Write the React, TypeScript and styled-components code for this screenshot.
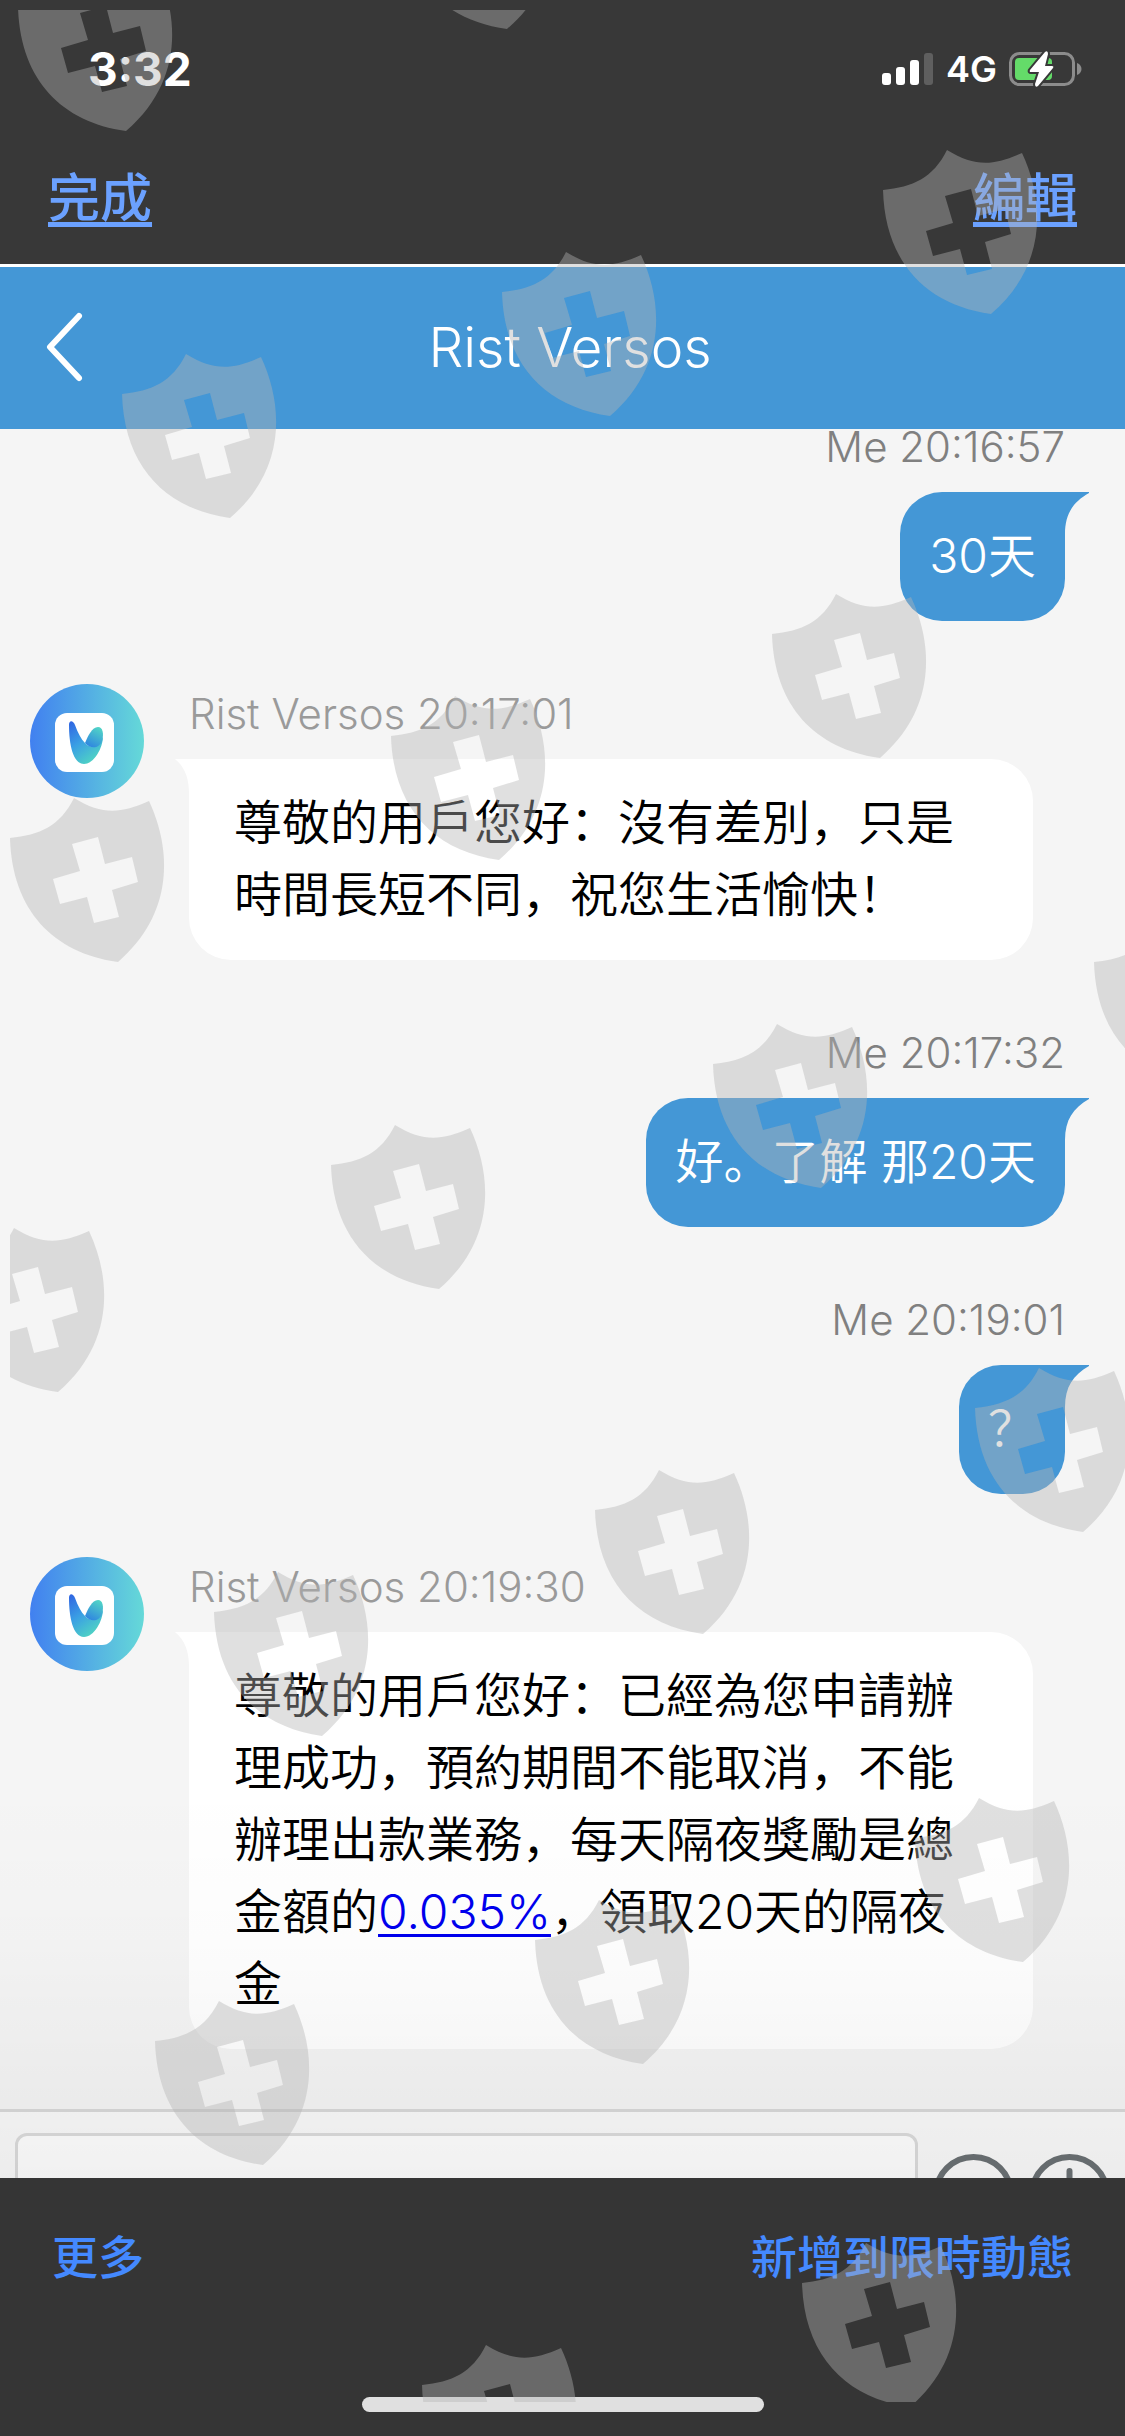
import React from "react";
import styled, { createGlobalStyle } from "styled-components";

const GlobalStyle = createGlobalStyle`
  *, *::before, *::after { box-sizing: border-box; }
  body {
    margin: 0;
    background: #363636;
    font-family: Inter, "Noto Sans CJK SC", sans-serif;
  }
`;

const Screen = styled.div`
  position: relative;
  display: flex;
  flex-direction: column;
  height: 100vh;
  overflow: hidden;
`;

const StatusBar = styled.div`
  display: flex;
  align-items: center;
  justify-content: space-between;
  flex: none;
  height: 138px;
  padding: 0 42px 0 88px;
  background: #383838;
  color: #fff;
`;

const Clock = styled.time`
  font-size: 46px;
  line-height: 60px;
  font-weight: 700;
`;

const StatusIcons = styled.div`
  display: flex;
  align-items: center;
  gap: 12px;
`;

const Network = styled.span`
  font-size: 36px;
  line-height: 36px;
  font-weight: 600;
`;

const ViewerNav = styled.nav`
  display: flex;
  justify-content: space-between;
  flex: none;
  padding: 21px 48px 33px;
  background: #383838;
`;

const NavButton = styled.button`
  padding: 0;
  border: 0;
  background: none;
  color: #6ba1ff;
  font: 500 52px/72px "Noto Sans CJK TC", sans-serif;
  text-decoration: underline 5px;
  text-underline-offset: 5px;
  text-decoration-skip-ink: none;
`;

const ChatHeader = styled.header`
  display: flex;
  align-items: center;
  flex: none;
  height: 165px;
  padding: 0 84px 3px 0;
  border-top: 3px solid #fff;
  background: #4497d6;
`;

const BackButton = styled.button`
  display: flex;
  width: 99px;
  padding: 0 0 0 45px;
  border: 0;
  background: none;
`;

const Title = styled.h1`
  flex: 1;
  margin: 0;
  color: #fff;
  font-size: 55px;
  line-height: 72px;
  font-weight: 350;
  text-align: center;
`;

const Conversation = styled.section`
  position: relative;
  display: flex;
  flex-direction: column;
  flex: 1;
  min-height: 0;
  background: #f5f5f5;

  &::after {
    content: "";
    position: absolute;
    inset: auto 0 0;
    height: 400px;
    background: linear-gradient(rgba(0, 0, 0, 0), rgba(0, 0, 0, 0.012) 40%, rgba(0, 0, 0, 0.055));
    pointer-events: none;
  }
`;

const Messages = styled.main`
  display: flex;
  flex-direction: column;
  justify-content: flex-end;
  gap: 63px;
  flex: 1;
  min-height: 0;
  overflow: hidden;
  padding: 0 60px 60px 30px;
`;

const Row = styled.article<{ $mine?: boolean }>`
  display: flex;
  flex: none;
  gap: 45px;
  justify-content: ${(p) => (p.$mine ? "flex-end" : "flex-start")};
  padding-right: ${(p) => (p.$mine ? "0" : "32px")};
`;

const Body = styled.div<{ $mine?: boolean }>`
  display: flex;
  flex-direction: column;
  flex: ${(p) => (p.$mine ? "none" : "1")};
  align-items: ${(p) => (p.$mine ? "flex-end" : "stretch")};
  gap: 15px;
`;

const Meta = styled.div<{ $mine?: boolean }>`
  color: ${(p) => (p.$mine ? "#808080" : "#9a9a9a")};
  font-size: 42px;
  line-height: 60px;
  font-weight: 350;
`;

const Bubble = styled.div<{ $mine?: boolean }>`
  position: relative;
  padding: ${(p) => (p.$mine ? "28px 29px" : "28px 45px 29px")};
  padding-bottom: 29px;
  border-radius: ${(p) => (p.$mine ? "42px 0 42px 42px" : "0 42px 42px 42px")};
  background: ${(p) => (p.$mine ? "#4497d6" : "#fff")};
  color: ${(p) => (p.$mine ? "#fff" : "#000")};
  font-size: 48px;
  line-height: 72px;
  font-weight: 350;
`;

const Tail = styled.svg<{ $mine?: boolean }>`
  position: absolute;
  top: 0;
  ${(p) => (p.$mine ? "left: 100%" : "right: 100%")};
  margin: 0 -1px;
`;

const RateLink = styled.a`
  color: #0000ee;
  text-decoration: underline 3px;
  text-underline-offset: 5px;
`;

const Composer = styled.form`
  flex: none;
  height: 69px;
  overflow: hidden;
  border-top: 3px solid #d9d9d9;
  background: #fafafa;
`;

const ComposerRow = styled.div`
  display: flex;
  align-items: center;
  gap: 15px;
  padding: 21px 15px;
`;

const MessageInput = styled.input`
  flex: 1;
  min-width: 0;
  height: 123px;
  padding: 0 30px;
  border: 3px solid #dcdcdc;
  border-radius: 12px;
  background: #fff;
  font: 350 48px/72px Inter, "Noto Sans CJK SC", sans-serif;
`;

const ToolButton = styled.button`
  display: flex;
  padding: 0;
  border: 0;
  background: none;
`;

const Footer = styled.footer`
  display: flex;
  flex-direction: column;
  justify-content: space-between;
  align-items: center;
  flex: none;
  height: 258px;
  padding: 46px 52px 24px;
  background: #353535;
`;

const FooterActions = styled.div`
  display: flex;
  justify-content: space-between;
  align-self: stretch;
`;

const FooterButton = styled.button`
  padding: 0;
  border: 0;
  background: none;
  color: #4489ff;
  font: 500 46px/60px "Noto Sans CJK TC", sans-serif;
`;

const HomeIndicator = styled.div`
  width: 402px;
  height: 15px;
  border-radius: 8px;
  background: #e0e0e0;
`;

const Watermark = styled.div`
  position: absolute;
  inset: 10px 0 34px 10px;
  overflow: hidden;
  pointer-events: none;

  svg {
    display: block;
    width: 100%;
    height: 100%;
  }
`;

const SHIELDS = [
  [18, -33], [399, -135],
  [883, 150], [502, 252], [122, 354],
  [772, 594], [391, 696], [10, 798],
  [1094, 922], [713, 1024], [331, 1125], [-50, 1228],
  [975, 1368], [595, 1470], [214, 1572],
  [915, 1798], [535, 1900], [155, 2001],
  [802, 2243], [422, 2345],
];

function ShieldWatermark() {
  return (
    <Watermark aria-hidden="true">
      <svg>
        <defs>
          <path
            id="shield"
            fillRule="evenodd"
            d="M0 40C30 37 50 28 64 0C92 17 110 16 139 3C162 52 164 116 108 164C43 155 2 112 0 40ZM62 46L88 39L95 66L122 59L128 84L102 92L109 119L84 125L77 99L50 106L43 81L70 73Z"
          />
        </defs>
        {SHIELDS.map(([x, y]) => (
          <use key={`${x},${y}`} href="#shield" x={x - 10} y={y - 10} fill="#b3b3b3" fillOpacity="0.41" />
        ))}
      </svg>
    </Watermark>
  );
}

function Avatar() {
  return (
    <svg width="114" height="114" viewBox="0 0 114 114" role="img" aria-label="Rist Versos">
      <defs>
        <linearGradient id="avatarBg">
          <stop offset="0" stopColor="#4180f0" />
          <stop offset="1" stopColor="#65d9d8" />
        </linearGradient>
        <linearGradient id="leafLeft" x1="0" y1="0" x2="0.6" y2="1">
          <stop offset="0" stopColor="#2f62e2" />
          <stop offset="0.5" stopColor="#3a9fe4" />
          <stop offset="1" stopColor="#4fd3c4" />
        </linearGradient>
        <linearGradient id="leafRight" x1="0.8" y1="0" x2="0.3" y2="1">
          <stop offset="0" stopColor="#52d6c6" />
          <stop offset="1" stopColor="#2f86e0" />
        </linearGradient>
      </defs>
      <circle cx="57" cy="57" r="57" fill="url(#avatarBg)" />
      <rect x="25" y="29" width="59" height="59" rx="12" fill="#fff" />
      <path d="M39 41C39 36 43 36 45 41C48 49 51 55 55 59C60 65 70 64 73 52C73 64 64 80 54 80C43 80 39 60 39 41Z" fill="url(#leafLeft)" />
      <path d="M55 59C58 52 62 43 68 43C73 43 74 50 72 57C69 65 60 65 55 59Z" fill="url(#leafRight)" />
    </svg>
  );
}

function Signal() {
  return (
    <svg width="52" height="34" viewBox="0 0 52 34" aria-hidden="true">
      <rect x="0" y="21" width="9" height="12" rx="3" fill="#fff" />
      <rect x="14" y="15" width="9" height="18" rx="3" fill="#fff" />
      <rect x="28" y="8" width="9" height="25" rx="3" fill="#fff" />
      <rect x="42" y="1" width="9" height="32" rx="3" fill="#5f5f5f" />
    </svg>
  );
}

function Battery() {
  return (
    <svg width="74" height="38" viewBox="0 0 74 38" aria-hidden="true">
      <rect x="1.500" y="3.500" width="63" height="31" rx="9" fill="none" stroke="#8c8c8c" strokeWidth="3" />
      <path d="M68 13C74 15 74 23 68 25Z" fill="#8c8c8c" />
      <rect x="6" y="8" width="37" height="22" rx="4" fill="#64db69" />
      <path
        d="M36 2L21 20Q20 22 22 22H30L26 34Q26 38 29 36L44 18Q45 16 43 16H36L39 4Q39 0 36 2Z"
        fill="#fff"
        stroke="#383838"
        strokeWidth="4"
        paintOrder="stroke"
      />
    </svg>
  );
}

type MessageProps = { mine?: boolean; author: string; time: string; children: React.ReactNode };

function Message({ mine, author, time, children }: MessageProps) {
  return (
    <Row $mine={mine}>
      {!mine && <Avatar />}
      <Body $mine={mine}>
        <Meta $mine={mine}>
          {author} <time>{time}</time>
        </Meta>
        <Bubble $mine={mine}>
          <Tail $mine={mine} width={mine ? 25 : 15} height={mine ? 42 : 34} aria-hidden="true">
            {mine ? (
              <path d="M0 0H25V1C9 10 1 22 1 42H0Z" fill="#4497d6" />
            ) : (
              <path d="M0 0H15V34H14C14 20 10 8 0 0Z" fill="#fff" />
            )}
          </Tail>
          {children}
        </Bubble>
      </Body>
    </Row>
  );
}

export default function App() {
  return (
    <>
      <GlobalStyle />
      <Screen lang="zh">
        <StatusBar>
          <Clock>3:32</Clock>
          <StatusIcons>
            <Signal />
            <Network>4G</Network>
            <Battery />
          </StatusIcons>
        </StatusBar>
        <ViewerNav>
          <NavButton type="button">完成</NavButton>
          <NavButton type="button">編輯</NavButton>
        </ViewerNav>
        <ChatHeader>
          <BackButton type="button" aria-label="返回">
            <svg width="40" height="72" viewBox="0 0 40 72" fill="none" stroke="#fff" strokeWidth="6" strokeLinecap="round" strokeLinejoin="round">
              <path d="M34 5L5 36L34 67" />
            </svg>
          </BackButton>
          <Title>Rist Versos</Title>
        </ChatHeader>
        <Conversation>
          <Messages>
            <Message mine author="Me" time="20:16:57">30天</Message>
            <Message author="Rist Versos" time="20:17:01">
              尊敬的用戶您好：沒有差別，只是時間長短不同，祝您生活愉快！
            </Message>
            <Message mine author="Me" time="20:17:32">好。了解 那20天</Message>
            <Message mine author="Me" time="20:19:01">？</Message>
            <Message author="Rist Versos" time="20:19:30">
              尊敬的用戶您好：已經為您申請辦理成功，預約期間不能取消，不能辦理出款業務，每天隔夜獎勵是總金額的<RateLink href="#rate">0.035%</RateLink>，領取20天的隔夜金
            </Message>
          </Messages>
          <Composer>
            <ComposerRow>
              <MessageInput type="text" aria-label="訊息" />
              <ToolButton type="button" aria-label="表情">
                <svg width="81" height="81" viewBox="0 0 81 81" fill="none" stroke="#6b7174" strokeWidth="6" strokeLinecap="round">
                  <circle cx="40.500" cy="40.500" r="37.500" />
                  <path d="M23 48C30 62 51 62 58 48" />
                </svg>
              </ToolButton>
              <ToolButton type="button" aria-label="更多功能">
                <svg width="81" height="81" viewBox="0 0 81 81" fill="none" stroke="#6b7174" strokeWidth="6" strokeLinecap="round">
                  <circle cx="40.500" cy="40.500" r="37.500" />
                  <path d="M40.500 17V64M17 40.500H64" />
                </svg>
              </ToolButton>
            </ComposerRow>
          </Composer>
        </Conversation>
        <Footer>
          <FooterActions>
            <FooterButton type="button">更多</FooterButton>
            <FooterButton type="button">新增到限時動態</FooterButton>
          </FooterActions>
          <HomeIndicator />
        </Footer>
        <ShieldWatermark />
      </Screen>
    </>
  );
}
